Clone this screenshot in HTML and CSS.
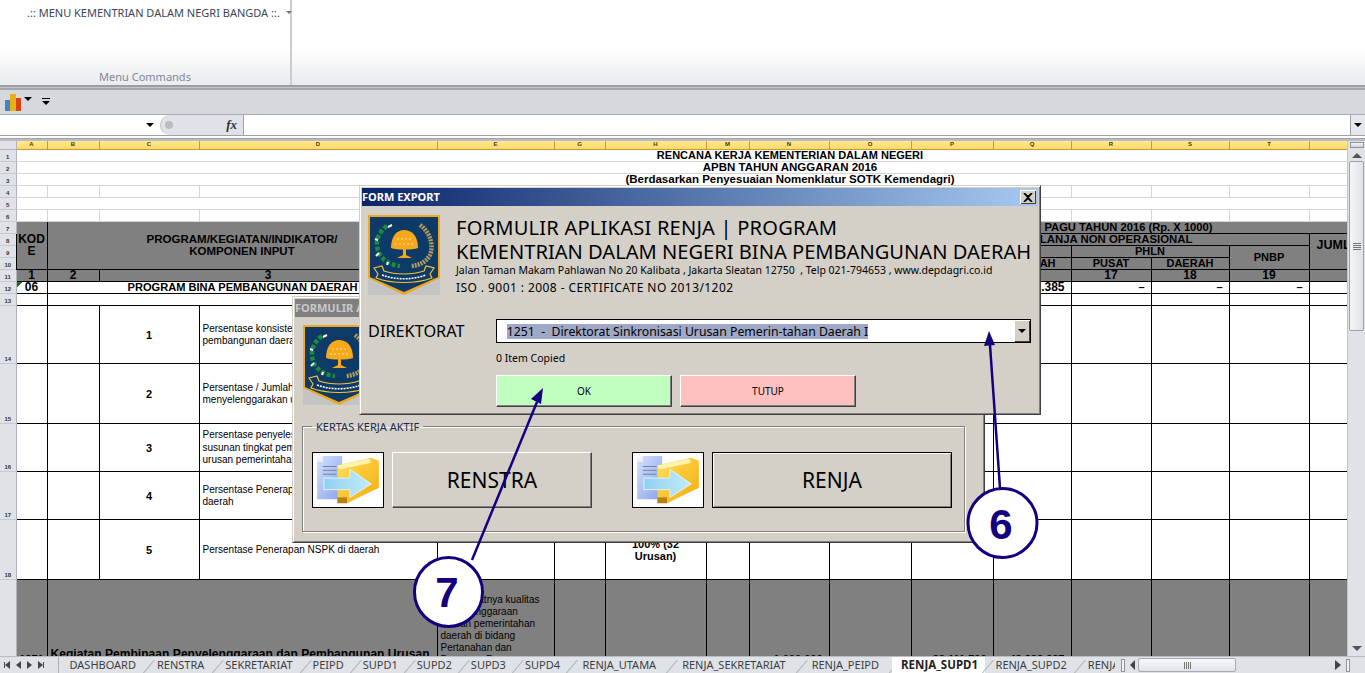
FILE: index.html
```html
<!DOCTYPE html>
<html lang="en">
<head>
    <meta charset="UTF-8">
    <meta name="viewport" content="width=device-width, initial-scale=1.0">
    <title>FORM EXPORT</title>
    <link rel="stylesheet" href="styles.css">
</head>
<body>
    <svg class="defs" width="0" height="0">
        <defs>
            <linearGradient id="doc-fill" x1="0" y1="0" x2="1" y2="1">
                <stop offset="0" stop-color="#d3e3f8"/>
                <stop offset="1" stop-color="#8a9ff0"/>
            </linearGradient>
            <linearGradient id="folder-fill" x1="0" y1="0" x2="1" y2="1">
                <stop offset="0" stop-color="#ffe45a"/>
                <stop offset="1" stop-color="#f5a80c"/>
            </linearGradient>
            <linearGradient id="arrow-fill" x1="0" y1="0" x2="1" y2="0">
                <stop offset="0" stop-color="#8fd0f2"/>
                <stop offset="1" stop-color="#c4ebfa"/>
            </linearGradient>
        </defs>
        <symbol id="logo" viewBox="0 0 72 80">
            <rect width="72" height="80" fill="#c4c4c4"/>
            <path d="M0 0H72V63L36 80L0 63Z" fill="#f0a820"/>
            <path d="M2 2H70V62L36 77L2 62Z" fill="#0d3a66"/>
            <path d="M23 33C23 21 29 15 36 15C44 15 50 21 50 33C44 35 29 35 23 33Z" fill="#f7a81b"/>
            <path d="M35 34H38V40L44 43H29L35 40Z" fill="#f7a81b"/>
            <path d="M27 29H46M29 24H44" stroke="#fff" stroke-width=".7" stroke-dasharray="2 2"/>
            <path d="M19 11C9 18 6 30 12 40C17 47 23 50 32 51" fill="none" stroke="#1f8a3c" stroke-width="4.5" stroke-dasharray="4 2"/>
            <path d="M20 12L24 10M10 25L7 24M11 38L8 41M20 47L19 50" stroke="#fff" stroke-width="2"/>
            <path d="M52 10C62 17 66 30 62 40C58 47 52 50 43 51" fill="none" stroke="#b39a5a" stroke-width="4.5" stroke-dasharray="2 1"/>
            <path d="M6 53L14 51L16 56C28 60 44 60 56 56L58 51L66 53L62 59L64 63C48 69 24 69 8 63L10 59Z" fill="#0d3a66" stroke="#f7c431" stroke-width="1.2"/>
            <path d="M14 60C28 65 44 65 58 60" fill="none" stroke="#fff" stroke-width="1.6" stroke-dasharray="2 1"/>
        </symbol>
        <symbol id="file-move" viewBox="0 0 72 56">
            <path d="M4 6L10 3H30V48H4Z" fill="url(#doc-fill)"/>
            <path d="M4 6L10 3V9H4Z" fill="#eef3ff"/>
            <path d="M10 14H24M10 18H24M10 22H24" stroke="#6f7f9f"/>
            <path d="M25 13L60 5L68 8V36L35 52H25Z" fill="url(#folder-fill)"/>
            <path d="M25 13L58 6L60 10L27 17Z" fill="#fff4ae"/>
            <path d="M25 46H35V52H25Z" fill="#b97d10"/>
            <path d="M11 26H38V17L60 32L38 46V38H11Z" fill="url(#arrow-fill)" stroke="#e2f5fc"/>
        </symbol>
    </svg>

    <div class="app">
        <div class="ribbon">
            <div class="ribbon-group">
                <div class="menu-btn">.:: MENU KEMENTRIAN DALAM NEGRI BANGDA ::. <span class="caret-sm"></span></div>
                <div class="group-label">Menu Commands</div>
            </div>
        </div>
        <div class="ribbon-edge"></div>
        <div class="qat">
            <svg width="17" height="17" viewBox="0 0 17 17">
                <rect x="0" y="6" width="5" height="11" fill="#3d85c6"/>
                <rect x="5" y="0" width="6" height="17" fill="#e8b010"/>
                <rect x="11" y="4" width="5" height="13" fill="#d8431c"/>
            </svg>
            <span class="caret"></span>
            <svg class="qat-more" width="8" height="8" viewBox="0 0 8 8"><path d="M0 0.5H8" stroke="#000"/><path d="M0 3H8L4 7Z"/></svg>
        </div>
        <div class="formula">
            <div class="name-box"><span class="caret"></span></div>
            <div class="fx-box"><span class="fx-dot"></span><span class="fx">fx</span></div>
            <div class="formula-input"></div>
            <div class="formula-drop"><span class="caret"></span></div>
        </div>
        <div class="formula-gap"></div>

        <div class="sheet">
            <div class="grid-wrap">
                <table class="grid">
                    <colgroup>
                        <col class="c-rh"><col class="c-a"><col class="c-b"><col class="c-c"><col class="c-d"><col class="c-e"><col class="c-g"><col class="c-h"><col class="c-m"><col class="c-n"><col class="c-o"><col class="c-p"><col class="c-q"><col class="c-r"><col class="c-s"><col class="c-t"><col class="c-u"><col class="c-v">
                    </colgroup>
                    <tr class="col-head">
                        <th class="corner"></th><th>A</th><th>B</th><th>C</th><th>D</th><th>E</th><th>G</th><th>H</th><th>M</th><th>N</th><th>O</th><th>P</th><th>Q</th><th>R</th><th>S</th><th>T</th><th></th><th></th>
                    </tr>
                    <tr class="h12 light"><th class="rh">1</th><td colspan="17" class="title">RENCANA KERJA KEMENTERIAN DALAM NEGERI</td></tr>
                    <tr class="h12 light"><th class="rh">2</th><td colspan="17" class="title title-wide">APBN TAHUN ANGGARAN 2016</td></tr>
                    <tr class="h12 light"><th class="rh">3</th><td colspan="17" class="title title-wide">(Berdasarkan Penyesuaian Nomenklatur SOTK Kemendagri)</td></tr>
                    <tr class="h12 light"><th class="rh">4</th><td></td><td></td><td></td><td></td><td></td><td></td><td></td><td></td><td></td><td></td><td></td><td></td><td></td><td></td><td></td><td></td><td></td></tr>
                    <tr class="h12 light"><th class="rh">5</th><td colspan="17"></td></tr>
                    <tr class="h12 light"><th class="rh">6</th><td></td><td></td><td></td><td></td><td></td><td></td><td></td><td></td><td></td><td></td><td></td><td></td><td></td><td></td><td></td><td></td><td></td></tr>

                    <tr class="h12 gray"><th class="rh">7</th>
                        <td rowspan="4" class="bold ctr big multi">KOD<br>E</td>
                        <td rowspan="4" colspan="3" class="bold ctr head-prog multi">PROGRAM/KEGIATAN/INDIKATOR/<br>KOMPONEN INPUT</td>
                        <td rowspan="4"></td><td rowspan="4"></td><td rowspan="4"></td><td rowspan="4"></td>
                        <td colspan="9" class="bold pagu">PAGU TAHUN 2016 (Rp. X 1000)</td>
                    </tr>
                    <tr class="h12 gray"><th class="rh">8</th>
                        <td colspan="7" class="bold belanja">BELANJA NON OPERASIONAL</td>
                        <td colspan="2" rowspan="3" class="bold jumlah">JUMLAH</td>
                    </tr>
                    <tr class="h12 gray"><th class="rh">9</th>
                        <td colspan="4"></td>
                        <td colspan="2" class="bold ctr">PHLN</td>
                        <td rowspan="2" class="bold ctr">PNBP</td>
                    </tr>
                    <tr class="h12 gray"><th class="rh">10</th>
                        <td colspan="3"></td>
                        <td class="bold ctr">DAERAH</td><td class="bold ctr">PUSAT</td><td class="bold ctr">DAERAH</td>
                    </tr>
                    <tr class="h12 gray"><th class="rh">11</th>
                        <td class="bold ctr big">1</td><td class="bold ctr big">2</td><td colspan="2" class="bold ctr big">3</td>
                        <td></td><td></td><td></td><td></td><td></td><td></td><td></td><td></td>
                        <td class="bold ctr big">17</td><td class="bold ctr big">18</td><td class="bold ctr big">19</td><td colspan="2"></td>
                    </tr>
                    <tr class="h12"><th class="rh">12</th>
                        <td class="bold ctr big flagged">06</td>
                        <td colspan="10" class="bold prog">PROGRAM BINA PEMBANGUNAN DAERAH</td>
                        <td class="bold num big">148.385</td>
                        <td class="bold num">–</td><td class="bold num">–</td><td class="bold num">–</td><td colspan="2"></td>
                    </tr>
                    <tr class="h12"><th class="rh">13</th>
                        <td></td><td colspan="10"></td><td></td><td></td><td></td><td></td><td colspan="2"></td>
                    </tr>

                    <tr class="h58"><th class="rh">14</th>
                        <td></td><td></td><td class="bold ctr">1</td><td class="txt">Persentase konsistensi program<br>pembangunan daerah</td>
                        <td></td><td></td><td></td><td></td><td></td><td></td><td></td><td></td><td></td><td></td><td></td><td></td><td></td>
                    </tr>
                    <tr class="h60"><th class="rh">15</th>
                        <td></td><td></td><td class="bold ctr">2</td><td class="txt">Persentase / Jumlah daerah yang<br>menyelenggarakan urusan</td>
                        <td></td><td></td><td></td><td></td><td></td><td></td><td></td><td></td><td></td><td></td><td></td><td></td><td></td>
                    </tr>
                    <tr class="h48"><th class="rh">16</th>
                        <td></td><td></td><td class="bold ctr">3</td><td class="txt">Persentase penyelesaian<br>susunan tingkat pemerintahan<br>urusan pemerintahan</td>
                        <td></td><td></td><td></td><td></td><td></td><td></td><td></td><td></td><td></td><td></td><td></td><td></td><td></td>
                    </tr>
                    <tr class="h48"><th class="rh">17</th>
                        <td></td><td></td><td class="bold ctr">4</td><td class="txt">Persentase Penerapan SPM di<br>daerah</td>
                        <td></td><td></td><td></td><td></td><td></td><td></td><td></td><td></td><td></td><td></td><td></td><td></td><td></td>
                    </tr>
                    <tr class="h60"><th class="rh">18</th>
                        <td></td><td></td><td class="bold ctr">5</td><td class="txt">Persentase Penerapan NSPK di daerah</td>
                        <td></td><td></td><td class="bold ctr multi">100% (32<br>Urusan)</td><td></td><td></td><td></td><td></td><td></td><td></td><td></td><td></td><td></td><td></td>
                    </tr>
                    <tr class="h148 gray"><th class="rh">19</th>
                        <td class="bold ctr low">1271</td>
                        <td colspan="3" class="bold kegiatan">Kegiatan Pembinaan Penyelenggaraan dan Pembangunan Urusan</td>
                        <td class="txt sasaran">Meningkatnya kualitas<br>penyelenggaraan<br>urusan pemerintahan<br>daerah di bidang<br>Pertanahan dan<br>Penataan Ruang</td>
                        <td></td><td></td><td></td>
                        <td class="bold num low">1.000.000</td><td class="bold num low">-</td><td class="bold num low">33.111.700</td><td class="bold num low">43.333.337</td><td class="bold num low">-</td><td class="bold num low">-</td><td class="bold num low">-</td><td></td><td></td>
                    </tr>
                </table>
            </div>
            <div class="vscroll">
                <div class="split-v"></div>
                <div class="arrow-up"></div>
                <div class="thumb-v"><span class="grip-v"></span></div>
                <div class="track-v"></div>
                <div class="arrow-down"></div>
            </div>
        </div>

        <div class="tabbar">
            <div class="tab-nav">
                <span class="nav-first"></span><span class="nav-prev"></span><span class="nav-next"></span><span class="nav-last"></span>
            </div>
            <div class="tabs">
                <span class="tab">DASHBOARD</span>
                <span class="tab">RENSTRA</span>
                <span class="tab">SEKRETARIAT</span>
                <span class="tab tab-s">PEIPD</span>
                <span class="tab tab-s">SUPD1</span>
                <span class="tab tab-s">SUPD2</span>
                <span class="tab tab-s">SUPD3</span>
                <span class="tab tab-s">SUPD4</span>
                <span class="tab tab-w">RENJA_UTAMA</span>
                <span class="tab tab-w">RENJA_SEKRETARIAT</span>
                <span class="tab tab-w">RENJA_PEIPD</span>
                <span class="tab active">RENJA_SUPD1</span>
                <span class="tab">RENJA_SUPD2</span>
                <span class="tab">RENJA_SUPD3</span>
            </div>
            <div class="hscroll">
                <span class="split-h"></span>
                <span class="arrow-left"></span>
                <div class="thumb-h"><span class="grip-h"></span></div>
                <div class="track-h"></div>
                <span class="arrow-right"></span>
                <span class="split-h"></span>
            </div>
        </div>
    </div>

    <!-- back window, not active -->
    <div class="dialog dialog-back">
        <div class="titlebar titlebar-off">FORMULIR APLIKASI</div>
        <div class="back-body">
            <svg class="logo"><use href="#logo"/></svg>
            <fieldset class="frame">
                <legend>KERTAS KERJA AKTIF</legend>
                <svg class="thumb"><use href="#file-move"/></svg>
                <button class="btn big-btn renstra">RENSTRA</button>
                <svg class="thumb thumb-2"><use href="#file-move"/></svg>
                <button class="btn big-btn renja">RENJA</button>
            </fieldset>
        </div>
    </div>

    <div class="dialog dialog-front">
        <div class="titlebar">FORM EXPORT<span class="close">
            <svg width="10" height="9" viewBox="0 0 10 9"><path d="M1 0L5 3.5L9 0M1 9L5 5.5L9 9M1 0L9 9M9 0L1 9" fill="none" stroke="#000" stroke-width="1.6"/></svg>
        </span></div>
        <div class="front-body">
            <div class="head">
                <svg class="logo"><use href="#logo"/></svg>
                <div class="head-text">
                    <h1><span class="h1-top">FORMULIR APLIKASI RENJA | PROGRAM</span><br>KEMENTRIAN DALAM NEGERI BINA PEMBANGUNAN DAERAH</h1>
                    <p class="addr">Jalan Taman Makam Pahlawan No 20 Kalibata , Jakarta Sleatan 12750&nbsp; , Telp 021-794653 , www.depdagri.co.id</p>
                    <p class="iso">ISO . 9001 : 2008 - CERTIFICATE NO 2013/1202</p>
                </div>
            </div>
            <div class="dir-row">
                <label>DIREKTORAT</label>
                <div class="combo">
                    <span class="combo-text">1251&nbsp; -&nbsp; Direktorat Sinkronisasi Urusan Pemerin-tahan Daerah I</span>
                    <span class="combo-btn"><span class="caret"></span></span>
                </div>
            </div>
            <div class="copied">0 Item Copied</div>
            <div class="actions">
                <button class="btn ok">OK</button>
                <button class="btn tutup">TUTUP</button>
            </div>
        </div>
    </div>

    <!-- numbered callouts drawn on top of the screenshot -->
    <svg class="callouts" width="1365" height="673" viewBox="0 0 1365 673">
        <path d="M1000 488L990 345" stroke="#14007f" stroke-width="2.5" fill="none"/>
        <path d="M989 331L984 346L995 345Z" fill="#14007f"/>
        <path d="M472 560L537 402" stroke="#14007f" stroke-width="2.5" fill="none"/>
        <path d="M543 388L531 399L541 404Z" fill="#14007f"/>
        <circle cx="1002.5" cy="523" r="34.5" fill="#fff" stroke="#14007f" stroke-width="3"/>
        <text x="1001" y="539" class="call-num">6</text>
        <ellipse cx="448.5" cy="592" rx="34" ry="34.5" fill="#fff" stroke="#14007f" stroke-width="3"/>
        <text x="447" y="607" class="call-num">7</text>
    </svg>
</body>
</html>
```

FILE: styles.css
```css
* {
    box-sizing: border-box;
}
html, body {
    margin: 0;
    height: 100%;
    overflow: hidden;
}
body {
    font-family: "Liberation Sans", Arial, sans-serif;
    background: #fff;
    position: relative;
}
.defs {
    display: block;
    height: 0;
}
.app {
    display: flex;
    flex-direction: column;
    height: 673px;
}

/* ribbon */
.ribbon {
    height: 85px;
    background: linear-gradient(#fff 0, #fff 48px, #e9ebee 85px);
    display: flex;
}
.ribbon-group {
    width: 292px;
    border-right: 2px solid #c9cdd3;
    display: flex;
    flex-direction: column;
    justify-content: space-between;
}
.menu-btn {
    padding: 6px 0 0 27px;
    font-size: 11px;
    line-height: 13px;
    color: #3c4658;
    font-family: "Noto Sans", sans-serif;
    white-space: nowrap;
}
.caret-sm {
    display: inline-block;
    border: 3px solid transparent;
    border-top: 3px solid #777;
    border-bottom: 0;
    margin: 0 0 3px 3px;
}
.group-label {
    text-align: center;
    font-size: 11px;
    color: #7d8a9c;
    font-family: "Noto Sans", sans-serif;
    padding-bottom: 1px;
    line-height: 15px;
}
.ribbon-edge {
    height: 5px;
    background: linear-gradient(#9a9ea4 0, #9a9ea4 2px, #c2c5ca 2px, #c2c5ca 3px, #a3a7ad 3px);
}
.qat {
    height: 25px;
    background: #d5d8dd;
    display: flex;
    align-items: center;
    padding-left: 5px;
    border-bottom: 1px solid #a9adb3;
}
.caret {
    display: inline-block;
    border: 4px solid transparent;
    border-top: 4px solid #000;
    border-bottom: 0;
}
.qat .caret {
    margin: 0 0 6px 2px;
}
.qat-more {
    margin-left: 10px;
}

/* formula bar */
.formula {
    height: 21px;
    display: flex;
    background: #fff;
    border-bottom: 1px solid #9fa3a9;
}
.name-box {
    width: 160px;
    display: flex;
    align-items: center;
    justify-content: flex-end;
    padding-right: 6px;
}
.fx-box {
    width: 84px;
    background: #dfe2e8;
    border-left: 1px solid #b9bdc3;
    border-right: 1px solid #9fa3a9;
    border-radius: 10px 0 0 10px;
    display: flex;
    align-items: center;
    justify-content: space-between;
    padding: 0 6px 0 4px;
}
.fx-dot {
    width: 8px;
    height: 8px;
    border-radius: 50%;
    background: #b9bcc1;
}
.fx {
    font-family: "Liberation Serif", serif;
    font-style: italic;
    font-weight: bold;
    font-size: 13px;
    color: #333;
}
.formula-input {
    flex: 1;
}
.formula-drop {
    width: 15px;
    background: #e4e7eb;
    border-left: 1px solid #9fa3a9;
    display: flex;
    align-items: center;
    justify-content: center;
}
.formula-gap {
    height: 5px;
    background: linear-gradient(#fff 0, #fff 2px, #9fa3a9 2px, #9fa3a9 3px, #b9bdc3 3px);
}

/* sheet */
.sheet {
    flex: 1;
    display: flex;
    min-height: 0;
}
.grid-wrap {
    width: 1347px;
    overflow: hidden;
}
.grid {
    border-collapse: collapse;
    table-layout: fixed;
    width: 1564px;
    font-size: 11px;
    line-height: 11px;
    color: #000;
}
.c-rh { width: 16px; }
.c-a { width: 31px; }
.c-b { width: 52px; }
.c-c { width: 100px; }
.c-d { width: 238px; }
.c-e { width: 117px; }
.c-g { width: 51px; }
.c-h { width: 101px; }
.c-m { width: 43px; }
.c-n { width: 80px; }
.c-o { width: 82px; }
.c-p { width: 82px; }
.c-q { width: 78px; }
.c-r { width: 80px; }
.c-s { width: 78px; }
.c-t { width: 80px; }
.c-u { width: 100px; }
.c-v { width: 155px; }

.grid td {
    padding: 0;
    border: 1px solid #000;
    overflow: hidden;
    white-space: nowrap;
}
.col-head {
    height: 8px;
}
.col-head th {
    padding: 0;
    height: 8px;
    font-size: 6px;
    line-height: 7px;
    font-weight: bold;
    color: #4a3a10;
    background: linear-gradient(#ffe88f, #ffd966);
    border-right: 1px solid #c8983a;
    border-bottom: 1px solid #c8983a;
}
.col-head .corner {
    background: #dfe3e8;
    border-color: #b0b4ba;
}
.rh {
    padding: 0;
    background: #dfe3e8;
    border-right: 1px solid #b0b4ba;
    border-bottom: 1px solid #c6cad0;
    font-size: 6px;
    line-height: 7px;
    color: #333;
    text-align: center;
    vertical-align: bottom;
}
.h12 { height: 12px; }
.h48 { height: 48px; }
.h58 { height: 58px; }
.h60 { height: 60px; }
.h148 { height: 148px; }

.h48 td, .h58 td, .h60 td {
    padding-top: 2px;
}
.light td {
    border-color: #d6d6d6;
}
.gray td {
    background: #808080;
}
.title {
    text-align: center;
    font-weight: bold;
    font-size: 11px;
}
.title-wide {
    font-size: 11.5px;
}
.bold { font-weight: bold; }
.ctr { text-align: center; }
.big { font-size: 12px; }
.multi { line-height: 12.5px; }
.head-prog { font-size: 11.5px; }
.num {
    text-align: right;
    padding-right: 6px !important;
}
.pagu {
    text-align: right;
    padding-right: 351px !important;
    font-size: 11.2px;
}
.belanja {
    text-align: right;
    padding-right: 116px !important;
    font-size: 11.4px;
}
.jumlah {
    padding: 6px 0 0 7px !important;
    vertical-align: top;
    font-size: 12.5px;
}
.prog {
    padding-left: 80px !important;
    font-size: 11.1px;
}
.flagged {
    background: linear-gradient(135deg, #0a7a1a 4px, transparent 4px) no-repeat;
}
.txt {
    padding-left: 3px !important;
    font-size: 10px;
    line-height: 12.5px;
}
.sasaran {
    padding-top: 14px !important;
    vertical-align: top;
    line-height: 12px;
}
.kegiatan {
    padding: 69px 0 0 3px !important;
    vertical-align: top;
    font-size: 12.1px;
}
.low {
    padding-top: 74px !important;
    vertical-align: top;
}

/* scrollbars */
.vscroll {
    width: 18px;
    background: #dfe3e8;
    display: flex;
    flex-direction: column;
    align-items: center;
    border-left: 1px solid #c2c6cc;
}
.split-v {
    width: 14px;
    height: 6px;
    margin-top: 1px;
    border: 1px solid #8f939a;
    background: linear-gradient(#f4f5f7, #cfd3d9);
}
.arrow-up {
    margin-top: 5px;
    border: 5px solid transparent;
    border-top: 0;
    border-bottom: 5px solid #555;
}
.thumb-v {
    margin-top: 3px;
    width: 15px;
    height: 170px;
    border: 1px solid #9da2a9;
    border-radius: 2px;
    background: linear-gradient(90deg, #f4f5f7, #dfe2e7);
    display: flex;
    align-items: center;
    justify-content: center;
}
.grip-v {
    width: 8px;
    height: 7px;
    background: repeating-linear-gradient(#777 0 1px, transparent 1px 2px);
}
.track-v {
    flex: 1;
}
.arrow-down {
    margin-bottom: 5px;
    border: 5px solid transparent;
    border-bottom: 0;
    border-top: 5px solid #555;
}

/* tabs */
.tabbar {
    height: 17px;
    background: #dfe3e8;
    border-top: 1px solid #b9bdc3;
    display: flex;
    font-family: "Noto Sans", sans-serif;
    font-size: 11px;
    line-height: 16px;
    color: #3d3d3d;
}
.tab-nav {
    width: 59px;
    flex: none;
    display: flex;
    align-items: center;
    gap: 6px;
    padding-left: 5px;
    border-right: 1px solid #aeb2b8;
}
.tab-nav span {
    width: 0;
    height: 0;
    border: 4px solid transparent;
}
.nav-first, .nav-prev {
    border-left: 0 !important;
    border-right: 5px solid #444 !important;
}
.nav-next, .nav-last {
    border-right: 0 !important;
    border-left: 5px solid #444 !important;
}
.nav-first {
    box-shadow: -2px 0 0 -1px #444;
}
.nav-last {
    box-shadow: 2px 0 0 -1px #444;
}
.tabs {
    width: 1056px;
    flex: none;
    overflow: hidden;
    display: flex;
    white-space: nowrap;
}
.tab {
    flex: none;
    padding: 0 10.5px;
    position: relative;
}
.tab-s {
    padding: 0 9.5px;
}
.tab-w {
    padding: 0 13px;
}
.tab::after {
    content: "";
    position: absolute;
    right: -3px;
    top: 3px;
    height: 14px;
    border-right: 1px solid #a3a7ad;
    transform: skewX(-40deg);
}
.tab.active {
    background: #fff;
    font-weight: bold;
    font-size: 11.5px;
    color: #222;
    padding: 0 7px 0 9px;
}
.hscroll {
    flex: 1;
    display: flex;
    align-items: center;
    padding: 0 15px 0 6px;
}
.split-h {
    width: 4px;
    height: 13px;
    flex: none;
    border: 1px solid #8f939a;
    background: #f0f2f4;
}
.arrow-left {
    margin: 0 3px 0 5px;
    border: 5px solid transparent;
    border-left: 0;
    border-right: 5px solid #444;
}
.arrow-right {
    margin: 0 5px 0 0;
    border: 5px solid transparent;
    border-right: 0;
    border-left: 6px solid #444;
}
.thumb-h {
    width: 98px;
    height: 14px;
    flex: none;
    border: 1px solid #a6abb2;
    border-radius: 2px;
    background: linear-gradient(#f6f7f9, #e1e4e9);
    display: flex;
    align-items: center;
    justify-content: center;
}
.grip-h {
    width: 7px;
    height: 7px;
    background: repeating-linear-gradient(90deg, #777 0 1px, transparent 1px 2px);
}
.track-h {
    flex: 1;
}

/* windows */
.dialog {
    position: absolute;
    background: #d4d0c8;
    border: 1px solid #404040;
    border-top-color: #d4d0c8;
    border-left-color: #d4d0c8;
    box-shadow: inset 1px 1px 0 #fff, inset -1px -1px 0 #808080;
    padding: 2px;
}
.dialog-front {
    left: 359px;
    top: 185px;
    width: 682px;
    height: 230px;
}
.dialog-back {
    left: 292px;
    top: 296px;
    width: 693px;
    height: 247px;
}
.titlebar {
    height: 18px;
    background: linear-gradient(90deg, #0a246a, #a6caf0);
    color: #fff;
    font-family: "Noto Sans", sans-serif;
    font-weight: bold;
    font-size: 11px;
    line-height: 18px;
    display: flex;
    justify-content: space-between;
    align-items: center;
}
.titlebar-off {
    background: #808080;
    color: #c8c8c8;
}
.close {
    width: 16px;
    height: 14px;
    margin-right: 2px;
    background: #d4d0c8;
    box-shadow: inset 1px 1px 0 #fff, inset -1px -1px 0 #404040;
    display: flex;
    align-items: center;
    justify-content: center;
}
.logo {
    width: 72px;
    height: 80px;
    flex: none;
    display: block;
}
.front-body {
    padding: 9px 7px 0 6px;
}
.head {
    display: flex;
    gap: 16px;
}
.head-text {
    color: #000;
    font-family: "Noto Sans", sans-serif;
    white-space: nowrap;
}
h1 {
    margin: 1px 0 0;
    font-weight: normal;
    font-size: 20.1px;
    line-height: 24px;
}
.h1-top {
    letter-spacing: .2px;
}
.addr {
    margin: 0;
    font-size: 10.5px;
    line-height: 13px;
}
.iso {
    margin: 3px 0 0;
    font-size: 12px;
    letter-spacing: .43px;
    line-height: 15px;
}
.dir-row {
    display: flex;
    align-items: center;
    margin-top: 24px;
    font-family: "Noto Sans", sans-serif;
}
.dir-row label {
    width: 128px;
    font-size: 16.3px;
}
.combo {
    width: 536px;
    height: 24px;
    background: #fff;
    border: 1px solid #000;
    display: flex;
    align-items: center;
    justify-content: space-between;
    padding-left: 10px;
    font-size: 12.25px;
}
.combo-text {
    background: #a0a8c8;
    line-height: 15px;
    white-space: nowrap;
}
.combo-btn {
    width: 16px;
    height: 22px;
    background: #d4d0c8;
    box-shadow: inset 1px 1px 0 #fff, inset -1px -1px 0 #404040;
    display: flex;
    align-items: center;
    justify-content: center;
}
.copied {
    margin: 8px 0 0 128px;
    font-family: "Noto Sans", sans-serif;
    font-size: 10.5px;
    line-height: 14px;
}
.actions {
    display: flex;
    gap: 8px;
    margin: 10px 0 0 128px;
}
.btn {
    border: 1px solid;
    border-color: #fff #404040 #404040 #fff;
    font-family: "Noto Sans", sans-serif;
    color: #000;
    box-shadow: inset -1px -1px 0 #808080;
    padding: 0;
}
.ok, .tutup {
    width: 176px;
    height: 32px;
    font-size: 10px;
}
.ok { background: #c0ffc0; }
.tutup { background: #ffc0c0; }

.back-body {
    padding: 8px 0 0 8px;
}
.frame {
    margin: 15px 0 0 -1px;
    width: 663px;
    height: 112px;
    padding: 19px 0 0 9px;
    border: 1px solid #808080;
    box-shadow: 1px 1px 0 #fff, inset 1px 1px 0 #fff;
    display: flex;
    align-items: flex-start;
    font-family: "Noto Sans", sans-serif;
}
.frame legend {
    margin-left: 0;
    padding: 0 4px;
    font-size: 11px;
    line-height: 13px;
    color: #1b2a4c;
}
.thumb {
    width: 72px;
    height: 56px;
    flex: none;
    background: #fff;
    border: 1px solid #000;
}
.thumb-2 {
    margin-left: 40px;
}
.big-btn {
    height: 56px;
    margin-left: 8px;
    background: #d4d0c8;
    font-size: 21px;
}
.renstra { width: 200px; }
.renja {
    width: 240px;
    border-color: #000;
    box-shadow: inset 1px 1px 0 #fff, inset -1px -1px 0 #808080;
}

/* callouts */
.callouts {
    position: absolute;
    left: 0;
    top: 0;
    pointer-events: none;
}
.call-num {
    font-family: "Liberation Sans", Arial, sans-serif;
    font-weight: bold;
    font-size: 42px;
    fill: #14007f;
    text-anchor: middle;
}
```
